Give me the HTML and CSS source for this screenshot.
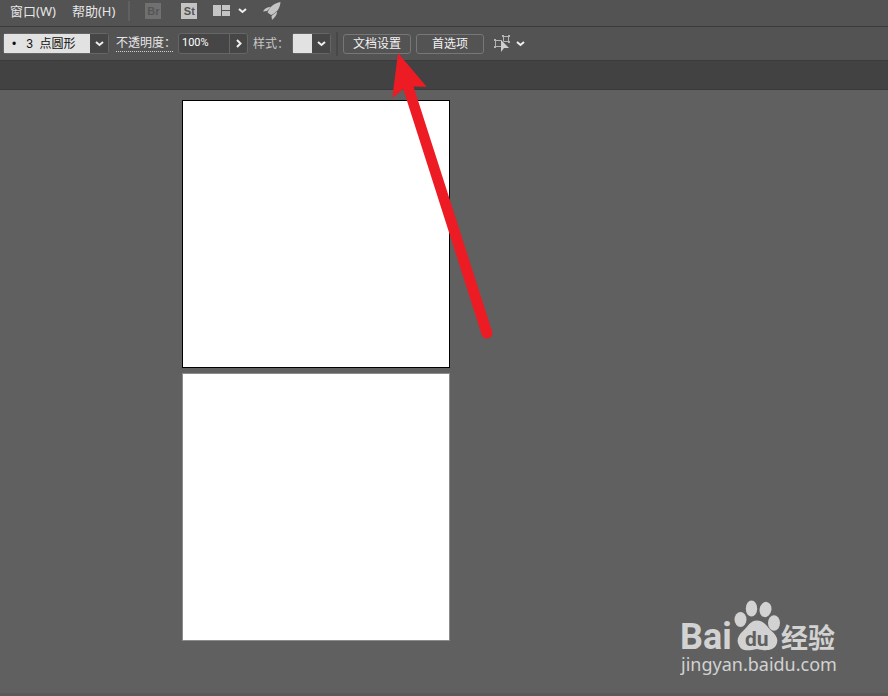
FILE: index.html
```
<!DOCTYPE html>
<html lang="zh-CN">
<head>
<meta charset="utf-8">
<title>文档设置</title>
<link rel="stylesheet" href="styles.css">
</head>
<body>
<nav class="menu-bar">
  <button class="menu-item" type="button">窗口(W)</button>
  <button class="menu-item" type="button">帮助(H)</button>
  <span class="menu-divider"></span>
  <button class="app-tile app-tile-off" type="button">Br</button>
  <button class="app-tile" type="button">St</button>
  <button class="icon-button layout-button" type="button" aria-label="排列文档">
    <svg width="34" height="12" viewBox="0 0 34 12"><path fill="#c4c4c4" d="M0 0h8v11H0zM9 0h8v5H9zM9 6h8v5H9z"/><path class="chevron" d="M26 4l3.500 3 3.500-3"/></svg>
  </button>
  <button class="icon-button" type="button" aria-label="GPU 性能">
    <svg width="18" height="18" viewBox="0 0 18 18" fill="#c4c4c4"><path d="M17.500 0C12 1 7 4 4.500 10.500l3.500 2.500C13 11 17 7 17.500 0z"/><path d="M8 5C4 5 1 7 0 9.500l4-.5zM14 9.500c0 4-2.500 6-5 8.500l-.5-4z"/></svg>
  </button>
</nav>

<div class="control-bar">
  <span class="select-box brush-box">
    <select class="brush-select" aria-label="画笔定义"><option>•&nbsp;&nbsp; 3&nbsp; 点圆形</option></select>
    <svg class="select-arrow" width="9" height="6" viewBox="0 0 9 6"><path class="chevron" d="M1 1l3.500 3L8 1"/></svg>
  </span>
  <label class="opacity-label" for="opacity">不透明度：</label>
  <span class="opacity-field">
    <input id="opacity" class="opacity-input" type="text" value="100%">
    <button class="opacity-more" type="button" aria-label="更多"><svg width="6" height="9" viewBox="0 0 6 9"><path class="chevron" d="M1 1l3.500 3.500L1 8"/></svg></button>
  </span>
  <label class="style-label" for="graphic-style">样式：</label>
  <span class="select-box style-box">
    <select id="graphic-style" class="style-select"><option></option></select>
    <svg class="select-arrow" width="9" height="6" viewBox="0 0 9 6"><path class="chevron" d="M1 1l3.500 3L8 1"/></svg>
  </span>
  <span class="control-divider"></span>
  <button class="text-button" type="button">文档设置</button>
  <button class="text-button" type="button">首选项</button>
  <button class="icon-button similar-button" type="button" aria-label="选择类似的对象">
    <svg width="32" height="18" viewBox="0 0 32 18"><path fill="none" stroke="#b4b4b4" d="M7.500 5.500h-6v6h6M9.500 1.500h5v5h-5z"/><path fill="#b4b4b4" d="M0 4h2v2H0zM0 11h2v2H0zM8 0h2v2H8zM14 0h2v2h-2zM14 6h2v2h-2z"/><path fill="#cfcfcf" d="M7 5v12l3-4h5z"/><path class="chevron" d="M23 7l3.500 3L30 7"/></svg>
  </button>
</div>

<div class="tab-strip"></div>

<main class="canvas">
  <div class="artboard artboard-active"></div>
  <div class="artboard"></div>
  <svg class="watermark" width="160" height="80" viewBox="0 0 160 80" fill="#d2d2d2">
    <text class="logo-latin" x="0" y="54">Bai</text>
    <ellipse cx="60.500" cy="24.500" rx="6" ry="7.500"/>
    <ellipse cx="71.500" cy="13.500" rx="5.700" ry="8"/>
    <ellipse cx="85.500" cy="14.500" rx="5.900" ry="7.700" transform="rotate(10 85.500 14.500)"/>
    <ellipse cx="94" cy="28" rx="6" ry="7.700"/>
    <path d="M77 25.500c7 0 10 6 14 10 6 5 8 10 5 15-4 6-12 5-19 3.500-8 1.500-15 3-18-3.500-3-5-1-10 4-14.500 5-4.500 7-10.500 14-10.500z"/>
    <text class="logo-du" x="65" y="51">du</text>
    <text class="logo-cjk" x="101" y="53">经验</text>
    <text class="logo-url" x="1" y="76">jingyan.baidu.com</text>
  </svg>
</main>

<svg class="pointer-arrow" width="104" height="290" viewBox="0 0 104 290">
  <path fill="#ed1c24" d="M8 2L36.700 35.700 23.500 35.500 102.300 281A5.500 5.500 0 0 1 91.800 284L13.300 38.300 2.300 47z"/>
</svg>
</body>
</html>
```
FILE: styles.css
```
* {
  box-sizing: border-box;
}

body {
  margin: 0;
  min-height: 100vh;
  display: flex;
  flex-direction: column;
  position: relative;
  background: #606060;
  color: #e6e6e6;
  font: 12px/18px "Liberation Sans", "Noto Sans CJK SC", sans-serif;
}

button,
select,
input {
  margin: 0;
  padding: 0;
  border: 0;
  border-radius: 0;
  background: none;
  color: inherit;
  font: inherit;
}

svg {
  display: block;
}

.chevron {
  fill: none;
  stroke: #f0f0f0;
  stroke-width: 2;
}

.menu-bar {
  display: flex;
  align-items: center;
  height: 27px;
  padding: 0 10px 4px;
  background: #535353;
  border-bottom: 1px solid #3b3b3b;
}

.menu-item {
  margin-right: 16px;
  font-family: "Noto Sans", "Noto Sans CJK SC", sans-serif;
  font-size: 13px;
}

.menu-divider {
  width: 2px;
  height: 20px;
  margin-right: 15px;
  margin-left: -3px;
  background: #606060;
}

.app-tile {
  width: 16px;
  height: 16px;
  margin-right: 16px;
  background: #c4c4c4;
  color: #535353;
  font-size: 11px;
  font-weight: bold;
  line-height: 16px;
}

.app-tile-off {
  margin-right: 20px;
  background: #707070;
  color: #565656;
}

.layout-button {
  margin-right: 16px;
}

.control-bar {
  display: flex;
  align-items: center;
  height: 34px;
  padding: 0 3px;
  background: #535353;
  border-bottom: 1px solid #3b3b3b;
}

.select-box {
  position: relative;
  height: 21px;
  border: 1px solid #666;
  border-radius: 3px;
  background: #464646;
}

.brush-box {
  width: 106px;
  margin-right: 7px;
}

.style-box {
  width: 39px;
  margin-right: 5px;
}

.brush-select,
.style-select {
  display: block;
  width: 100%;
  height: 19px;
  appearance: none;
  color: #111;
}

.brush-select {
  padding-left: 8px;
  background: linear-gradient(90deg, #e2e2e2 86px, #464646 86px);
}

.style-select {
  background: linear-gradient(90deg, #e2e2e2 19px, #464646 19px);
}

.select-arrow {
  position: absolute;
  top: 7px;
  right: 4px;
  pointer-events: none;
}

.opacity-label {
  width: 57px;
  margin-right: 5px;
  border-bottom: 1px dotted #d0d0d0;
  line-height: 16px;
  white-space: nowrap;
}

.opacity-field {
  display: flex;
  width: 70px;
  height: 21px;
  margin-right: 5px;
  border: 1px solid #666;
  border-radius: 3px;
  background: #464646;
}

.opacity-input {
  width: 51px;
  padding: 0 3px 2px;
  border-right: 1px solid #666;
  color: #fff;
  font-family: Roboto, sans-serif;
  font-size: 11px;
}

.opacity-more {
  flex: 1;
  display: grid;
  place-items: center;
}

.style-label {
  width: 39px;
  color: #c8c8c8;
  white-space: nowrap;
}

.control-divider {
  width: 2px;
  height: 24px;
  margin-right: 5px;
  background: #484848;
}

.text-button {
  width: 68px;
  height: 20px;
  margin-right: 5px;
  border: 1px solid #777;
  border-radius: 3px;
  color: #f2f2f2;
}

.similar-button {
  margin-left: 5px;
}

.tab-strip {
  height: 29px;
  background: #424242;
  border-bottom: 1px solid #3a3a3a;
}

.canvas {
  flex: 1;
  position: relative;
  display: flex;
  flex-direction: column;
  gap: 5px;
  padding: 10px 20px 10px 182px;
  border-bottom: 3px solid #5c595a;
}

.artboard {
  width: 268px;
  height: 268px;
  background: #fff;
  border: 1px solid #8c8c8c;
}

.artboard-active {
  border-color: #000;
}

.watermark {
  position: absolute;
  right: 48px;
  bottom: 18px;
}

.logo-latin {
  font: bold 36px Roboto, sans-serif;
}

.logo-du {
  fill: #606060;
  font: bold 21px Roboto, sans-serif;
}

.logo-cjk {
  font: bold 27px "Noto Sans CJK SC", sans-serif;
}

.logo-url {
  font: 18px "Noto Sans", sans-serif;
}

.pointer-arrow {
  position: absolute;
  top: 51px;
  left: 390px;
  pointer-events: none;
}
```
